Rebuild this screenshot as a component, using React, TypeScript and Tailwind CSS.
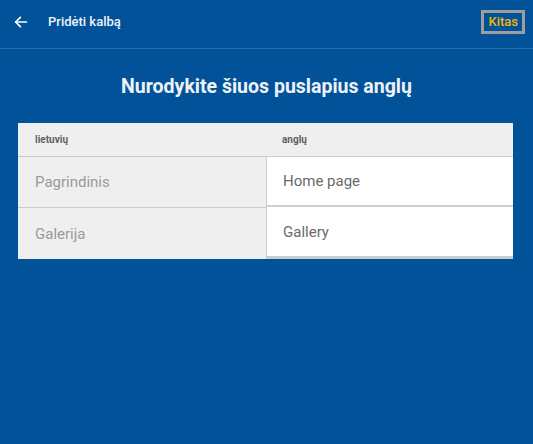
import React from "react";

const rows = [
  { source: "Pagrindinis", target: "Home page" },
  { source: "Galerija", target: "Gallery" },
];

const App: React.FC = () => {
  return (
    <div className="min-h-screen w-full bg-[#02529a] font-['Roboto',sans-serif]">
      {/* Top bar */}
      <div className="flex h-[49px] items-center border-b border-[#2a6aa6] pl-[13px] pr-[8px]">
        <svg width="16" height="16" viewBox="0 0 24 24" fill="none" stroke="#ffffff" strokeWidth="2.6" strokeLinecap="round" strokeLinejoin="round" className="mt-[-4px]">
          <path d="M20 12H4" />
          <path d="M11 5l-7 7 7 7" />
        </svg>
        <span className="ml-[19px] mt-[-4px] text-[13px] font-medium text-[#eef2f7]">Pridėti kalbą</span>
        <button className="ml-auto mt-[-5px] h-[24px] border-[3px] border-[#9e9e9e] px-[4px] text-[13px] font-medium leading-none text-[#f2b705]">
          Kitas
        </button>
      </div>

      <h1 className="mt-[23px] text-center text-[19.5px] font-bold text-[#eef2f7]">
        Nurodykite šiuos puslapius anglų
      </h1>

      {/* Translation table */}
      <div className="mx-[18px] mt-[22px] w-[495px] overflow-hidden">
        <div className="flex h-[34px] items-center border-b border-[#cccccc] bg-[#efefef] text-[10px] font-bold text-[#5f5f5f]">
          <div className="w-[247px] pl-[17px]">lietuvių</div>
          <div className="pl-[17px]">anglų</div>
        </div>
        <div className="flex">
          <div className="w-[248px] bg-[#efefef]">
            {rows.map((r, i) => (
              <div
                key={r.source}
                className={`flex h-[51px] items-center pl-[17px] text-[15px] text-[#9a9a9a] ${i === 0 ? "border-b border-[#cccccc]" : ""}`}
              >
                {r.source}
              </div>
            ))}
          </div>
          <div className="flex-1 border-l border-[#cccccc] bg-white">
            {rows.map((r, i) => (
              <div
                key={r.target}
                className={`flex items-center pl-[16px] text-[15px] text-[#6a6a6a] ${i === 0 ? "h-[50px] border-b-2 border-[#d0d0d0]" : "h-[52px] border-b-[3px] border-[#cccccc]"}`}
              >
                {r.target}
              </div>
            ))}
          </div>
        </div>
      </div>
    </div>
  );
};

export default App;
